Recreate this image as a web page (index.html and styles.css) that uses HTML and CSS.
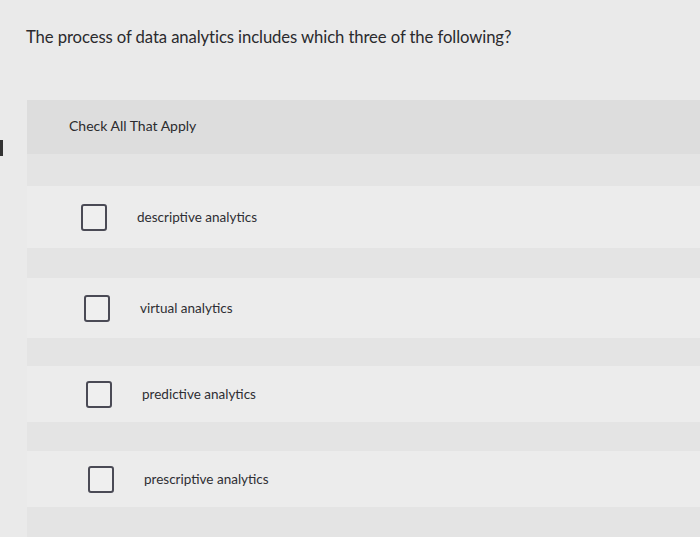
FILE: index.html
```html
<!DOCTYPE html>
<html>
<head>
<meta charset="utf-8">
<link rel="stylesheet" href="styles.css">
</head>
<body>
<div class="edge-mark"></div>
<h1 class="question">The process of data analytics includes which three of the following?</h1>
<div class="panel">
  <div class="panel-head">Check All That Apply</div>
  <div class="band"></div>
  <label class="option o1"><span class="box"></span><span class="label">descriptive analytics</span></label>
  <div class="band b2"></div>
  <label class="option o2"><span class="box"></span><span class="label">virtual analytics</span></label>
  <div class="band b3"></div>
  <label class="option o3"><span class="box"></span><span class="label">predictive analytics</span></label>
  <div class="band b4"></div>
  <label class="option o4"><span class="box"></span><span class="label">prescriptive analytics</span></label>
  <div class="band b5"></div>
</div>
</body>
</html>
```
FILE: styles.css
```css
html, body {
  margin: 0;
  padding: 0;
}
body {
  width: 700px;
  height: 537px;
  overflow: hidden;
  background: #eaeaea;
  font-family: Lato, "Liberation Sans", sans-serif;
  color: #2b2b2e;
  position: relative;
}
.edge-mark {
  position: absolute;
  left: 0;
  top: 140px;
  width: 3px;
  height: 16px;
  background: #333;
}
.question {
  margin: 0;
  padding: 27px 0 0 26px;
  height: 100px;
  box-sizing: border-box;
  font-size: 16.7px;
  font-weight: 400;
  line-height: 20px;
  letter-spacing: -0.1px;
}
.panel {
  margin-left: 27px;
  background: #ececec;
  display: flex;
  flex-direction: column;
}
.panel-head {
  height: 54px;
  background: #dddddd;
  padding-left: 42px;
  display: flex;
  align-items: center;
  font-size: 14px;
  padding-bottom: 3px;
  box-sizing: border-box;
}
.band {
  height: 32px;
  background: #e4e4e4;
}
.band.b2 { height: 30px; }
.band.b3 { height: 28px; }
.band.b4 { height: 29px; }
.band.b5 { height: 30px; }
.option {
  display: flex;
  align-items: center;
  font-size: 13.5px;
  color: #2e2e33;
}
.o1 { padding-left: 54px; height: 62px; }
.o2 { padding-left: 57px; height: 60px; }
.o3 { padding-left: 59px; height: 56px; }
.o4 { padding-left: 61px; height: 56px; }
.box {
  width: 22px;
  height: 23px;
  border: 2px solid #4a4a55;
  border-radius: 3px;
  background: #efefef;
  flex: none;
}
.label {
  margin-left: 30px;
}
```
